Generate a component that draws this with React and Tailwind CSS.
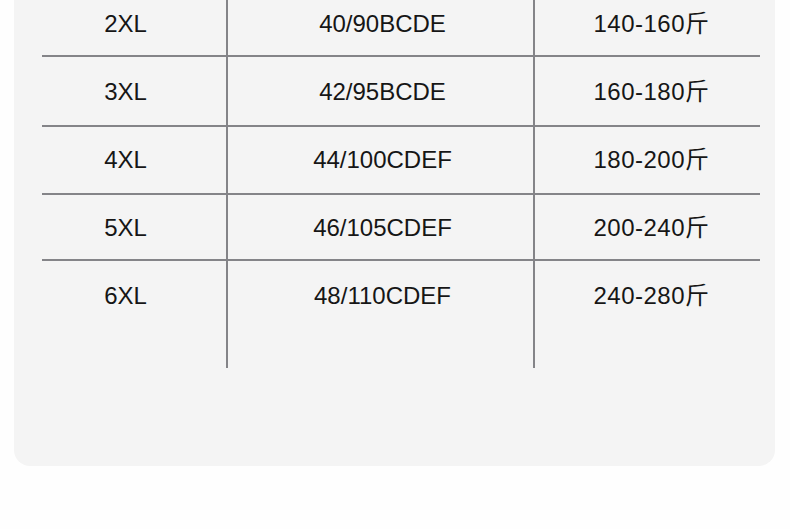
export default function App() {
  const rows = [
    { s: "2XL", b: "40/90BCDE", w: "140-160斤", h: "h-[57px]", pt: "pt-[10px]", border: true },
    { s: "3XL", b: "42/95BCDE", w: "160-180斤", h: "h-[70px]", pt: "pt-[21px]", border: true },
    { s: "4XL", b: "44/100CDEF", w: "180-200斤", h: "h-[68px]", pt: "pt-[19px]", border: true },
    { s: "5XL", b: "46/105CDEF", w: "200-240斤", h: "h-[66px]", pt: "pt-[19px]", border: true },
    { s: "6XL", b: "48/110CDEF", w: "240-280斤", h: "h-[107px]", pt: "pt-[21px]", border: false },
  ];
  return (
    <div className="w-[790px] h-[529px] bg-[#fefefe] overflow-hidden">
      <div className="mx-[14px] w-[761px] h-[466px] bg-[#f4f4f4] rounded-b-[16px] pl-[28px] pr-[15px]">
        <div
          className="w-[718px] text-[#161616] text-[24px] leading-[28px]"
          style={{ fontFamily: '"Liberation Sans", "Noto Sans CJK SC", sans-serif' }}
        >
          {rows.map((r) => (
            <div
              key={r.s}
              className={`flex ${r.h} ${r.border ? "border-b-2 border-[#848488]" : ""}`}
            >
              <div className={`w-[184px] ${r.pt} pr-[17px] text-center`}>{r.s}</div>
              <div className={`w-[307px] ${r.pt} pl-[4px] border-l-2 border-[#848488] text-center`}>{r.b}</div>
              <div className={`w-[227px] ${r.pt} pl-[8px] border-l-2 border-[#848488] text-center tracking-[0.5px]`}>{r.w}</div>
            </div>
          ))}
        </div>
      </div>
    </div>
  );
}
